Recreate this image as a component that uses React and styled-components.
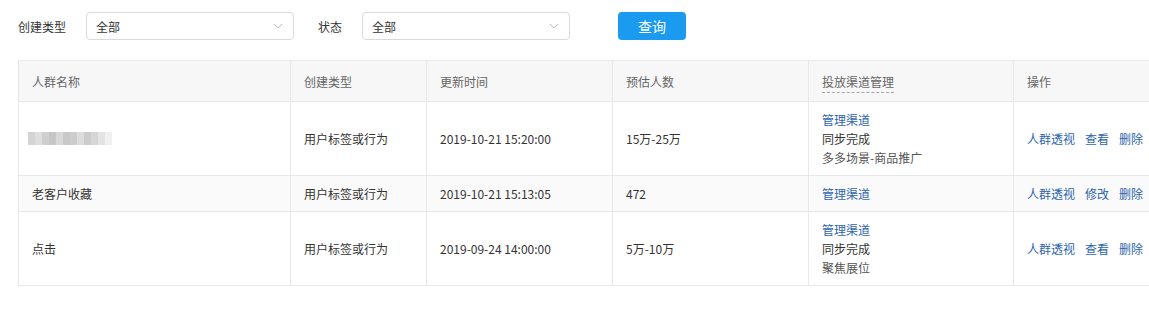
import styled, { createGlobalStyle } from "styled-components";

const GlobalStyle = createGlobalStyle`
  html, body {
    margin: 0;
    padding: 0;
    background: #fff;
    overflow: hidden;
  }
  body {
    font-family: "Noto Sans CJK SC", "Noto Sans", sans-serif;
    font-size: 12px;
    color: #333;
  }
`;

const Page = styled.div`
  padding: 12px 0 0 18px;
  box-sizing: border-box;
  width: 100%;
  overflow: hidden;
`;

const FilterBar = styled.div`
  display: flex;
  align-items: center;
  height: 28px;
  margin-bottom: 20px;
`;

const Label = styled.span`
  color: #333;
  font-size: 12px;
  margin-right: 20px;
  margin-left: ${(p) => p.$offset || 0}px;
`;

const Select = styled.div`
  box-sizing: border-box;
  width: 208px;
  height: 28px;
  border: 1px solid #d9d9d9;
  border-radius: 4px;
  display: flex;
  align-items: center;
  justify-content: space-between;
  padding: 0 10px 0 9px;
  color: #333;
`;

const Button = styled.button`
  margin-left: 48px;
  width: 68px;
  height: 28px;
  border: none;
  border-radius: 4px;
  background: #1a9bef;
  color: #fff;
  font-family: inherit;
  font-size: 14px;
  cursor: pointer;
`;

const TableWrap = styled.div`
  overflow: hidden;
`;

const Table = styled.table`
  border-collapse: collapse;
  table-layout: fixed;
  width: 1160px;
  border-left: 1px solid #e8e8e8;
`;

const Th = styled.th`
  background: #f7f7f7;
  color: #666;
  font-weight: normal;
  text-align: left;
  height: 40px;
  padding: 0 13px;
  border-top: 1px solid #ececec;
  border-right: 1px solid #e8e8e8;
  border-bottom: 1px solid #e8e8e8;
  font-size: 12px;
`;

const Tr = styled.tr`
  background: ${(p) => (p.$hover ? "#fafafa" : "#fff")};
`;

const Td = styled.td`
  padding: 8px 13px;
  line-height: 19px;
  vertical-align: middle;
  border-right: 1px solid #e8e8e8;
  border-bottom: 1px solid #e8e8e8;
  color: #333;
`;

const Hint = styled.span`
  border-bottom: 1px dashed #aaa;
  padding-bottom: 2px;
`;

const Link = styled.a`
  color: #2d65ad;
  text-decoration: none;
  cursor: pointer;
  display: ${(p) => (p.$block ? "block" : "inline")};
  margin-right: ${(p) => (p.$block ? 0 : 10)}px;
`;

const Line = styled.div`
  color: ${(p) => (p.$muted ? "#555" : "#333")};
`;

const Mosaic = styled.div`
  display: flex;
  height: 13px;
  margin-left: -4px;
`;

const Pixel = styled.span`
  width: 7px;
  height: 13px;
  background: ${(p) => p.$c};
`;

const mosaic = ["#d4d4d4", "#dedede", "#cfcfcf", "#c6c6c6", "#d8d8d8", "#c9c9c9", "#cdcdcd", "#dcdcdc", "#cccccc", "#d6d6d6", "#e4e4e4", "#f0f0f0"];

const Chevron = () => (
  <svg width="10" height="6" viewBox="0 0 10 6" fill="none">
    <path d="M1 1l4 4 4-4" stroke="#bfbfbf" strokeWidth="1" />
  </svg>
);

const rows = [
  {
    name: null,
    type: "用户标签或行为",
    time: "2019-10-21 15:20:00",
    count: "15万-25万",
    channel: ["同步完成", "多多场景-商品推广"],
    ops: ["人群透视", "查看", "删除"],
  },
  {
    name: "老客户收藏",
    type: "用户标签或行为",
    time: "2019-10-21 15:13:05",
    count: "472",
    channel: [],
    ops: ["人群透视", "修改", "删除"],
    hover: true,
  },
  {
    name: "点击",
    type: "用户标签或行为",
    time: "2019-09-24 14:00:00",
    count: "5万-10万",
    channel: ["同步完成", "聚焦展位"],
    ops: ["人群透视", "查看", "删除"],
  },
];

const widths = [272, 136, 186, 196, 205, 165];

export default function App() {
  return (
    <Page>
      <GlobalStyle />
      <FilterBar>
        <Label>创建类型</Label>
        <Select>
          <span>全部</span>
          <Chevron />
        </Select>
        <Label $offset={24}>状态</Label>
        <Select>
          <span>全部</span>
          <Chevron />
        </Select>
        <Button>查询</Button>
      </FilterBar>
      <TableWrap>
        <Table>
          <colgroup>
            {widths.map((w, i) => (
              <col key={i} style={{ width: w }} />
            ))}
          </colgroup>
          <thead>
            <tr>
              <Th>人群名称</Th>
              <Th>创建类型</Th>
              <Th>更新时间</Th>
              <Th>预估人数</Th>
              <Th>
                <Hint>投放渠道管理</Hint>
              </Th>
              <Th>操作</Th>
            </tr>
          </thead>
          <tbody>
            {rows.map((r, i) => (
              <Tr key={i} $hover={r.hover}>
                <Td>
                  {r.name ? (
                    r.name
                  ) : (
                    <Mosaic>
                      {mosaic.map((c, j) => (
                        <Pixel key={j} $c={c} />
                      ))}
                    </Mosaic>
                  )}
                </Td>
                <Td>{r.type}</Td>
                <Td>{r.time}</Td>
                <Td>{r.count}</Td>
                <Td>
                  <Link $block>管理渠道</Link>
                  {r.channel.map((c, j) => (
                    <Line key={j} $muted={j === 1}>
                      {c}
                    </Line>
                  ))}
                </Td>
                <Td>
                  {r.ops.map((o) => (
                    <Link key={o}>{o}</Link>
                  ))}
                </Td>
              </Tr>
            ))}
          </tbody>
        </Table>
      </TableWrap>
    </Page>
  );
}
